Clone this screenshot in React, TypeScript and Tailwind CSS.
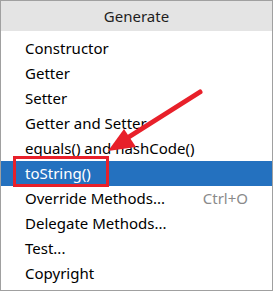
const items = [
  { label: 'Constructor' },
  { label: 'Getter' },
  { label: 'Setter' },
  { label: 'Getter and Setter' },
  { label: 'equals() and hashCode()' },
  { label: 'toString()', selected: true },
  { label: 'Override Methods...', shortcut: 'Ctrl+O' },
  { label: 'Delegate Methods...' },
  { label: 'Test...' },
  { label: 'Copyright' },
];

export default function App() {
  return (
    <div className="relative w-[274px] h-[292px] bg-white" style={{ fontFamily: '"Noto Sans", "Open Sans", sans-serif' }}>
      <div className="w-[273px] h-[291px] border border-[#a0a0a0] flex flex-col">
        <div className="h-[30px] bg-[#e4e4e4] flex items-center justify-center text-[15px] text-[#1e1e1e]">
          Generate
        </div>
        <ul className="pt-[5px]">
          {items.map((it) => (
            <li
              key={it.label}
              className={
                it.selected
                  ? 'h-[25px] flex items-center justify-between pl-6 pr-6 text-[15px] bg-[#2471bf] text-white'
                  : 'h-[25px] flex items-center justify-between pl-6 pr-6 text-[15px] text-black'
              }
            >
              <span>{it.label}</span>
              {it.shortcut && <span className="text-[#8a8a8a]">{it.shortcut}</span>}
            </li>
          ))}
        </ul>
      </div>

      {/* annotation: red box + arrow */}
      <svg className="absolute inset-0 pointer-events-none" width="274" height="292">
        <rect x="14.5" y="157.5" width="93" height="28" fill="none" stroke="#e8202a" strokeWidth="3" />
        <line x1="200" y1="92" x2="128" y2="137.5" stroke="#e8202a" strokeWidth="5" strokeLinecap="round" />
        <polygon points="108,151 124,129 136,147" fill="#e8202a" />
      </svg>
    </div>
  );
}
